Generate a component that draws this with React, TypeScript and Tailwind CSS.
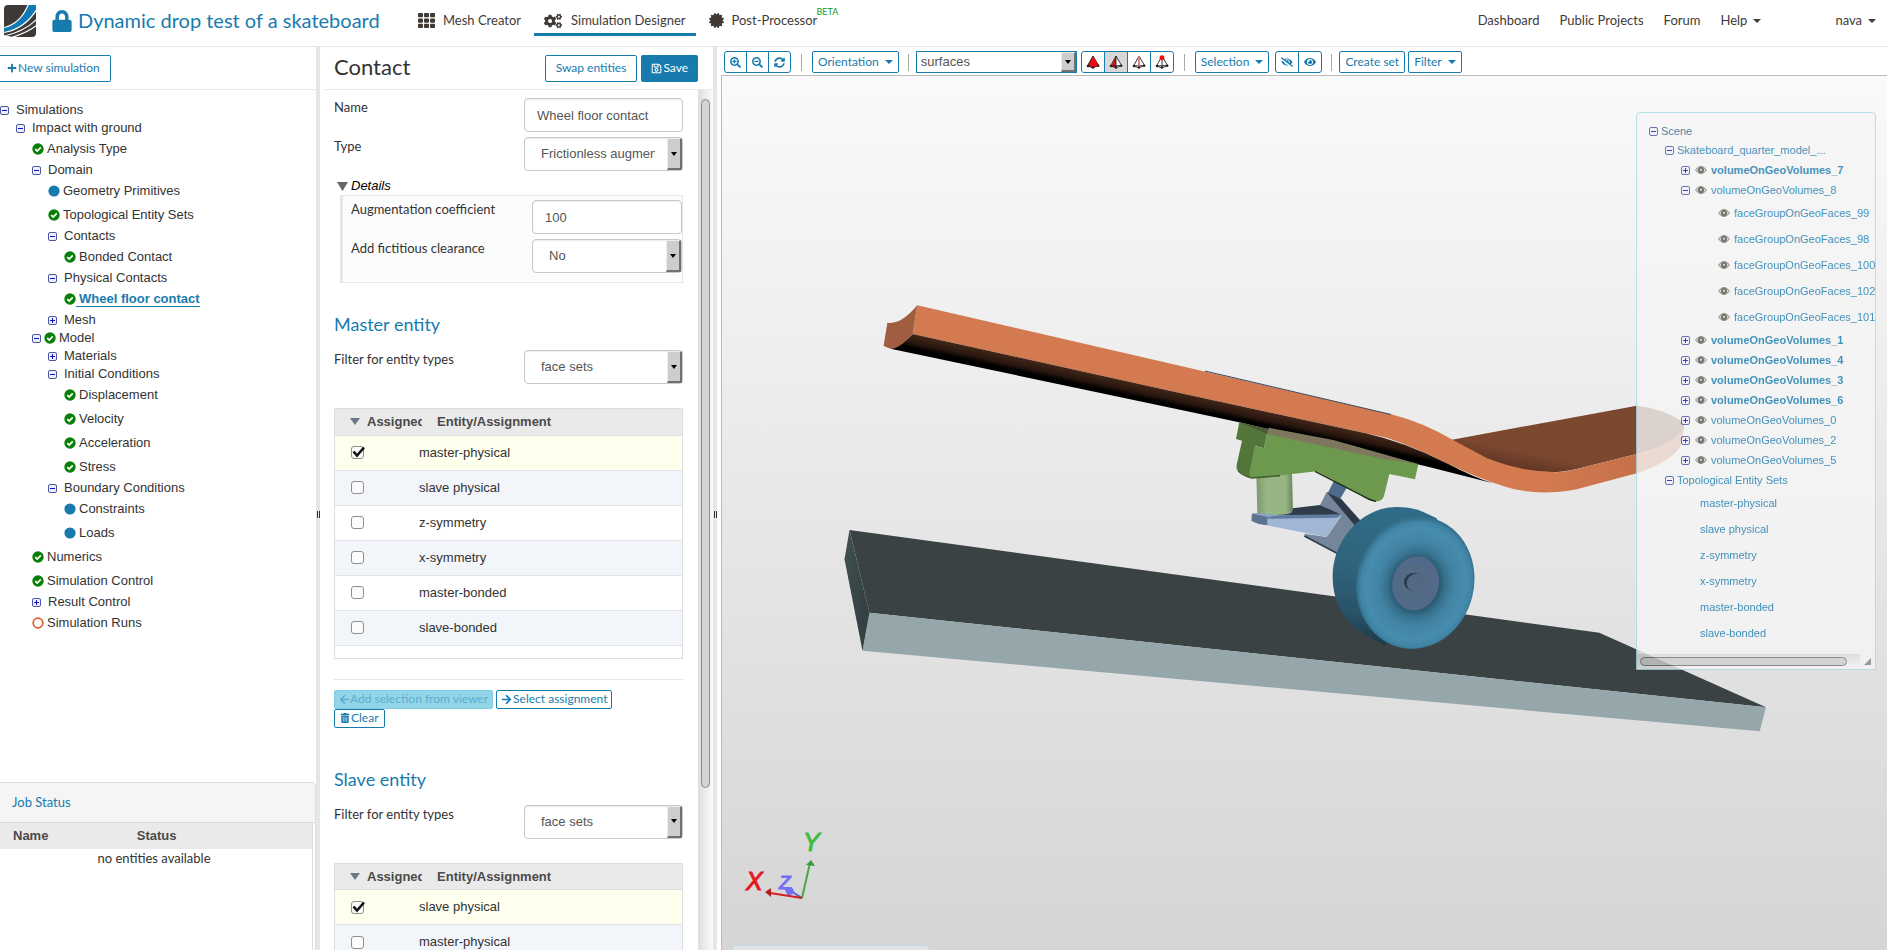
import React, { useId } from "react";
import {
  FaArrowLeft,
  FaArrowRight,
  FaCertificate,
  FaCogs,
  FaEye,
  FaEyeSlash,
  FaLock,
  FaPlus,
  FaRegSave,
  FaSearchMinus,
  FaSearchPlus,
  FaSyncAlt,
  FaTh,
  FaTrashAlt,
} from "react-icons/fa";

const BTN =
  "flex items-center justify-center rounded-[2px] border border-[#177bae] bg-white text-[#177bae] whitespace-nowrap";

function Logo() {
  return (
    <svg viewBox="0 0 32 32" className="h-8 w-8" aria-hidden="true">
      <defs>
        <clipPath id="logoClip">
          <path d="M4 0H32V28Q32 32 28 32H9Q4 31 0 30V4Q0 0 4 0Z" />
        </clipPath>
      </defs>
      <g clipPath="url(#logoClip)">
        <rect width="32" height="32" fill="#3f3a36" />
        <path d="M0 23C12 20 19 13 24 0H32V6C25 18 14 25 0 27Z" fill="#0f7ab5" />
        <path d="M0 22.500C11 20 19 13 24.500 -1" fill="none" stroke="#fff" strokeWidth="1.200" />
        <path d="M0 27.500C14 25 25 17 33 4" fill="none" stroke="#fff" strokeWidth="1.200" />
        <path d="M0 31C14 28 25 22 33 14" fill="none" stroke="#fff" strokeWidth="1.200" />
        <path d="M6 33C16 30 25 27 33 20" fill="none" stroke="#fff" strokeWidth="1.200" />
      </g>
    </svg>
  );
}

function Caret() {
  return (
    <svg viewBox="0 0 8 4" className="h-1 w-2" aria-hidden="true">
      <path d="M0 0H8L4 4Z" fill="currentColor" />
    </svg>
  );
}

function Header() {
  return (
    <header className="flex h-[47px] shrink-0 items-start border-b border-[#e6e6e6] pl-1 pr-[11px]">
      <div className="flex h-[41px] items-center">
        <Logo />
        <FaLock className="ml-4 h-[22px] w-5 text-[#177bae]" />
        <h1 className="ml-[6px] w-[340px] whitespace-nowrap pb-[2px] text-[20px] text-[#177bae]">
          Dynamic drop test of a skateboard
        </h1>
      </div>
      <nav className="flex h-9 items-stretch text-[13px] text-[#3f3a36]">
        <a href="#mesh" className="flex items-center pb-[2px] pr-[13px]">
          <FaTh className="mr-2 mt-[6px] h-[17px] w-[17px]" />
          <span className="pt-[7px]">Mesh Creator</span>
        </a>
        <a href="#simulation" className="flex items-center border-b-[3px] border-[#177bae] px-[10px]">
          <FaCogs className="mr-[9px] mt-2 h-[18px] w-[18px]" />
          <span className="pt-2">Simulation Designer</span>
        </a>
        <a href="#post" className="relative flex items-center pb-[3px] pl-[13px]">
          <FaCertificate className="mr-2 mt-2 h-[15px] w-[15px]" />
          <span className="pt-2">Post-Processor</span>
          <sup className="absolute -right-[21px] top-[7px] text-[9px] leading-none text-[#159a15]">BETA</sup>
        </a>
      </nav>
      <nav className="ml-auto flex h-[41px] items-center text-[13px] text-[#3f3a36]">
        <a href="#dashboard">Dashboard</a>
        <a href="#projects" className="ml-5">Public Projects</a>
        <a href="#forum" className="ml-5">Forum</a>
        <button className="ml-5 flex items-center gap-[6px]">Help <Caret /></button>
        <button className="ml-[74px] flex items-center gap-[6px]">nava <Caret /></button>
      </nav>
    </header>
  );
}

function Expander({ open }: { open: boolean }) {
  return (
    <svg viewBox="0 0 9 9" className="h-[9px] w-[9px] shrink-0" aria-hidden="true">
      <rect x="0.500" y="0.500" width="8" height="8" rx="1.500" fill="#f0f0f8" stroke="#4a56a8" />
      <path d={open ? "M2 4.500H7" : "M2 4.500H7M4.500 2V7"} stroke="#1010cc" />
    </svg>
  );
}

type Mark = "check" | "dot" | "ring";

function StatusMark({ mark }: { mark: Mark }) {
  return (
    <svg viewBox="0 0 12 12" className="h-3 w-3 shrink-0" aria-hidden="true">
      {mark === "check" && (
        <>
          <circle cx="6" cy="6" r="5.700" fill="#088008" />
          <path d="M3.200 6.200L5.200 8L8.800 4.300" fill="none" stroke="#fff" strokeWidth="1.700" />
        </>
      )}
      {mark === "dot" && <circle cx="6" cy="6" r="5.600" fill="#177bae" />}
      {mark === "ring" && <circle cx="6" cy="6" r="4.800" fill="#fff" stroke="#e0592a" strokeWidth="1.700" />}
    </svg>
  );
}

type Node = { t: string; d: number; open?: boolean; mark?: Mark; active?: boolean };

const NODES: Node[] = [
  { t: "Simulations", d: 0, open: true },
  { t: "Impact with ground", d: 1, open: true },
  { t: "Analysis Type", d: 2, mark: "check" },
  { t: "Domain", d: 2, open: true },
  { t: "Geometry Primitives", d: 3, mark: "dot" },
  { t: "Topological Entity Sets", d: 3, mark: "check" },
  { t: "Contacts", d: 3, open: true },
  { t: "Bonded Contact", d: 4, mark: "check" },
  { t: "Physical Contacts", d: 3, open: true },
  { t: "Wheel floor contact", d: 4, mark: "check", active: true },
  { t: "Mesh", d: 3, open: false },
  { t: "Model", d: 2, open: true, mark: "check" },
  { t: "Materials", d: 3, open: false },
  { t: "Initial Conditions", d: 3, open: true },
  { t: "Displacement", d: 4, mark: "check" },
  { t: "Velocity", d: 4, mark: "check" },
  { t: "Acceleration", d: 4, mark: "check" },
  { t: "Stress", d: 4, mark: "check" },
  { t: "Boundary Conditions", d: 3, open: true },
  { t: "Constraints", d: 4, mark: "dot" },
  { t: "Loads", d: 4, mark: "dot" },
  { t: "Numerics", d: 2, mark: "check" },
  { t: "Simulation Control", d: 2, mark: "check" },
  { t: "Result Control", d: 2, open: false },
  { t: "Simulation Runs", d: 2, mark: "ring" },
];

const INDENT = ["pl-0", "pl-4", "pl-8", "pl-12", "pl-16"];

function TreeRow({ node }: { node: Node }) {
  const folder = node.open !== undefined;
  return (
    <li className={`flex items-center ${INDENT[node.d]} ${folder ? "h-[18px]" : "h-6"}`}>
      {folder && <Expander open={!!node.open} />}
      {folder && node.mark && <span className="w-[3px]" />}
      {node.mark && <StatusMark mark={node.mark} />}
      <a
        href="#node"
        className={
          node.active
            ? "border-b border-[#177bae] pl-[3px] font-bold leading-[14px] text-[#177bae]"
            : folder && !node.mark
              ? "pl-[7px] text-[#333]"
              : "pl-[3px] text-[#333]"
        }
      >
        {node.t}
      </a>
    </li>
  );
}

function LeftPanel() {
  return (
    <aside className="flex w-[316px] shrink-0 flex-col">
      <div className="flex h-[43px] items-center border-b border-[#e6e6e6]">
        <button className={`${BTN} h-[27px] rounded-l-none border-l-0 pl-[7px] pr-[10px] text-[12px]`}>
          <FaPlus className="mr-px h-[10px] w-[10px]" />
          New simulation
        </button>
      </div>
      <ul className="flex-1 overflow-hidden pt-[11px] font-[family-name:'Liberation_Sans',Arial,sans-serif] text-[13px] leading-4">
        {NODES.map((n) => (
          <TreeRow key={n.t} node={n} />
        ))}
      </ul>
      <section className="flex h-[168px] flex-col rounded-tr border-r border-t border-[#dcdcdc]">
        <h2 className="flex h-10 items-center border-b border-[#dcdcdc] bg-[#f5f5f5] pl-3 text-[13px] text-[#177bae]">
          Job Status
        </h2>
        <div className="mr-[2px] flex-1 border-r border-[#dcdcdc]">
          <table className="w-full table-fixed text-[13px] text-[#333]">
            <thead>
              <tr className="h-[26px] bg-[#eaeaea] text-left font-[family-name:'Liberation_Sans',Arial,sans-serif] text-[13px] text-[#4a4a4a]">
                <th className="w-[40%] pl-[13px]">Name</th>
                <th className="pl-3">Status</th>
              </tr>
            </thead>
            <tbody>
              <tr>
                <td colSpan={2} className="pr-1 text-center leading-[18px]">no entities available</td>
              </tr>
            </tbody>
          </table>
        </div>
      </section>
    </aside>
  );
}

function Splitter() {
  return (
    <div className="flex w-1 shrink-0 items-center justify-end bg-[#e6e6e6] pt-8">
      <span className="h-[7px] w-[3px] border-x border-[#333]" />
    </div>
  );
}

function ArrowButton() {
  return (
    <span className="pointer-events-none absolute bottom-px right-px top-px flex w-[15px] items-center justify-center border-b-2 border-l border-r-2 border-t border-b-[#707070] border-l-[#ececec] border-r-[#707070] border-t-[#ececec] bg-[#cdcdcd]">
      <svg viewBox="0 0 6 4" className="h-1 w-[6px]" aria-hidden="true">
        <path d="M0 0H6L3 4Z" fill="#000" />
      </svg>
    </span>
  );
}

const SANS = "font-[family-name:'Liberation_Sans',Arial,sans-serif]";

function Field({
  label,
  value,
  kind,
  narrow,
}: {
  label: string;
  value: string;
  kind: "input" | "select";
  narrow?: boolean;
}) {
  const id = useId();
  return (
    <div className="flex h-[34px] items-start justify-between text-[13px] text-[#333]">
      <label htmlFor={id} className="leading-[18px]">{label}</label>
      <div className={`relative h-[34px] ${narrow ? "w-[150px]" : "w-[159px]"}`}>
        {kind === "input" ? (
          <input
            id={id}
            defaultValue={value}
            className={`${SANS} h-full w-full rounded border border-[#c8c8c8] bg-white px-3 text-[13px] text-[#555] shadow-[inset_0_1px_1px_rgba(0,0,0,0.08)]`}
          />
        ) : (
          <>
            <select
              id={id}
              className={`${SANS} h-full w-full appearance-none overflow-hidden rounded border border-[#c8c8c8] bg-white pl-4 pr-[27px] text-[13px] text-[#555] shadow-[inset_0_1px_1px_rgba(0,0,0,0.08)]`}
            >
              <option>{value}</option>
            </select>
            <ArrowButton />
          </>
        )}
      </div>
    </div>
  );
}

function EntityTable({ rows }: { rows: string[] }) {
  return (
    <div className="mt-6 border border-[#ddd] pb-3">
      <table className={`${SANS} w-full table-fixed text-[13px] text-[#333]`}>
        <colgroup>
          <col className="w-[84px]" />
          <col className="w-[18px]" />
          <col />
        </colgroup>
        <thead>
          <tr className="h-[26px] border-b border-[#ddd] bg-[#eaeaea] text-left text-[#4a4a4a]">
            <th colSpan={2} className="pl-[15px] pr-[15px]">
              <span className="flex items-center overflow-hidden">
                <svg viewBox="0 0 10 7" className="mr-[7px] h-[7px] w-[10px] shrink-0" aria-hidden="true">
                  <path d="M0 0H10L5 7Z" fill="#6d7787" />
                </svg>
                Assigned
              </span>
            </th>
            <th>Entity/Assignment</th>
          </tr>
        </thead>
        <tbody>
          {rows.map((r, i) => (
            <tr
              key={r}
              className={`h-[35px] border-b border-[#e2e4e8] ${i === 0 ? "bg-[#ffffee]" : i % 2 ? "bg-[#f2f5fa]" : "bg-white"}`}
            >
              <td className="pl-4">
                <span className="grid h-[13px] w-[15px]">
                  <input
                    type="checkbox"
                    aria-label={r}
                    defaultChecked={i === 0}
                    className="peer col-start-1 row-start-1 h-[13px] w-[13px] appearance-none rounded-[3px] border border-[#8f8f8f] bg-[#fcfcfc]"
                  />
                  <svg
                    viewBox="0 0 15 13"
                    className="pointer-events-none col-start-1 row-start-1 hidden h-[13px] w-[15px] peer-checked:block"
                    aria-hidden="true"
                  >
                    <path d="M2.500 5.500L6 9.500L13 1.500" fill="none" stroke="#111" strokeWidth="2.600" />
                  </svg>
                </span>
              </td>
              <td colSpan={2}>{r}</td>
            </tr>
          ))}
        </tbody>
      </table>
    </div>
  );
}

function EntitySection({ title, rows }: { title: string; rows: string[] }) {
  return (
    <section className="pb-10">
      <h3 className="mb-[15px] text-[18px] leading-[22px] text-[#177bae]">{title}</h3>
      <Field label="Filter for entity types" value="face sets" kind="select" />
      <EntityTable rows={rows} />
      <div className="mt-5 flex flex-col items-start border-t border-[#e6e6e6] pt-[10px] text-[12px]">
        <div className="flex gap-[3px]">
          <button
            disabled
            className="flex h-[19px] items-center whitespace-nowrap rounded-[2px] border border-[#7fcde3] bg-[#93d5e8] px-1 text-[#5badd0]"
          >
            <FaArrowLeft className="h-[11px] w-[11px]" />
            Add selection from viewer
          </button>
          <button className={`${BTN} h-[19px] px-1`}>
            <FaArrowRight className="mr-px h-[11px] w-[11px]" />
            Select assignment
          </button>
        </div>
        <button className={`${BTN} h-[19px] px-[5px]`}>
          <FaTrashAlt className="mr-px h-[10px] w-[10px]" />
          Clear
        </button>
      </div>
    </section>
  );
}

function ContactPanel() {
  return (
    <main className="flex w-[393px] shrink-0 flex-col">
      <div className="ml-1 flex h-[43px] shrink-0 items-center border-b border-[#e6e6e6] pl-[10px] pr-[15px]">
        <h2 className="pb-[3px] text-[22px] leading-7 text-[#333]">Contact</h2>
        <button className={`${BTN} ml-auto h-[27px] px-[10px] text-[12px]`}>Swap entities</button>
        <button className="ml-1 flex h-[27px] items-center rounded-[2px] bg-[#177bae] px-[10px] text-[12px] text-white">
          <FaRegSave className="mr-px h-[11px] w-[11px]" />
          Save
        </button>
      </div>
      <div className="flex min-h-0 flex-1">
        <form className="h-full min-w-0 flex-1 overflow-hidden pl-[14px] pr-[15px] pt-2">
          <div className="flex flex-col gap-[5px]">
            <Field label="Name" value="Wheel floor contact" kind="input" />
            <Field label="Type" value="Frictionless augmented Lagrange" kind="select" />
          </div>
          <details open className="mb-[30px] mt-[6px]">
            <summary className={`${SANS} flex h-[18px] items-center pl-[3px] text-[13px] italic text-black`}>
              <svg viewBox="0 0 11 9" className="mr-[3px] h-[9px] w-[11px]" aria-hidden="true">
                <path d="M0 0H11L5.500 9Z" fill="#666" />
              </svg>
              Details
            </summary>
            <div className="ml-[6px] flex flex-col gap-[5px] border border-l-[3px] border-[#e6e6e6] bg-[#fcfcfc] pb-[9px] pl-2 pt-1">
              <Field label="Augmentation coefficient" value="100" kind="input" narrow />
              <Field label="Add fictitious clearance" value="No" kind="select" narrow />
            </div>
          </details>
          <EntitySection
            title="Master entity"
            rows={["master-physical", "slave physical", "z-symmetry", "x-symmetry", "master-bonded", "slave-bonded"]}
          />
          <EntitySection
            title="Slave entity"
            rows={["slave physical", "master-physical", "z-symmetry", "x-symmetry", "master-bonded", "slave-bonded"]}
          />
        </form>
        <div className="w-[15px] bg-linear-to-r from-[#dedede] to-[#fbfbfb] pl-[3px] pt-[9px]">
          <div className="h-[81%] w-[9px] rounded-full border border-[#8c8c8c] bg-[#d4d4d4]" />
        </div>
      </div>
    </main>
  );
}

function Tetra({ variant }: { variant: "solid" | "face" | "edge" | "point" }) {
  return (
    <svg viewBox="0 0 14 14" className="h-[14px] w-[14px]" aria-hidden="true">
      <path d="M7 1L1 11L7 13L13 10.500Z" fill={variant === "solid" ? "#e01010" : "#fff"} />
      {variant === "face" && <path d="M7 1L2 11L7 13Z" fill="#e01010" />}
      <path d="M7 1L1.500 11L7 12.800L12.500 10.500Z M7 1L7 12.800 M1.500 11L12.500 10.500" fill="none" stroke="#222" strokeWidth="0.900" />
      {variant === "solid" && <path d="M7 1L3.500 11L7 12.800L12.500 10.500Z" fill="#e81010" />}
      {variant === "edge" && <path d="M7 1L7 12.800" stroke="#f08080" strokeWidth="1.500" />}
      {variant === "point" && <circle cx="7" cy="2.800" r="2.500" fill="#f01010" />}
      <circle cx="2" cy="11" r="1.300" fill="#222" />
      <circle cx="7" cy="12.500" r="1.200" fill="#222" />
      <circle cx="12.200" cy="10.800" r="1.200" fill="#222" />
    </svg>
  );
}

function Separator({ wide }: { wide?: boolean }) {
  return <span className={`h-[17px] w-px bg-[#aaa] ${wide ? "mx-[10px]" : "ml-[9px] mr-[7px]"}`} />;
}

const ICON_BTN = "flex h-full items-center justify-center px-[5px]";

function Toolbar() {
  const group = "flex h-[22px] items-stretch divide-x divide-[#177bae] rounded-[3px] border border-[#177bae] text-[#177bae]";
  return (
    <div className="flex h-7 shrink-0 items-center pb-[2px] pl-[7px] pt-1 text-[12px]">
      <div className={group}>
        <button aria-label="Zoom in" className={ICON_BTN}><FaSearchPlus className="h-[11px] w-[11px]" /></button>
        <button aria-label="Zoom out" className={ICON_BTN}><FaSearchMinus className="h-[11px] w-[11px]" /></button>
        <button aria-label="Reset view" className={ICON_BTN}><FaSyncAlt className="h-[11px] w-[11px]" /></button>
      </div>
      <Separator wide />
      <button className={`${BTN} h-[22px] gap-[6px] px-[5px]`}>Orientation <Caret /></button>
      <Separator />
      <div className="relative h-[22px] w-[161px]">
        <select
          aria-label="Display mode"
          className={`${SANS} h-full w-full appearance-none border border-[#177bae] bg-white px-1 text-[13px] text-[#555]`}
        >
          <option>surfaces</option>
        </select>
        <ArrowButton />
      </div>
      <div className={`${group} ml-1`}>
        <button aria-label="Solid" className="px-1"><Tetra variant="solid" /></button>
        <button aria-label="Faces" className="bg-[#d8d8d8] px-1"><Tetra variant="face" /></button>
        <button aria-label="Edges" className="px-1"><Tetra variant="edge" /></button>
        <button aria-label="Points" className="px-1"><Tetra variant="point" /></button>
      </div>
      <Separator wide />
      <button className={`${BTN} h-[22px] gap-[6px] px-[5px]`}>Selection <Caret /></button>
      <div className={`${group} ml-[6px]`}>
        <button aria-label="Hide" className={ICON_BTN}><FaEyeSlash className="h-3 w-3" /></button>
        <button aria-label="Show" className={ICON_BTN}><FaEye className="h-3 w-3" /></button>
      </div>
      <Separator />
      <button className={`${BTN} h-[22px] px-[5px]`}>Create set</button>
      <button className={`${BTN} ml-[3px] h-[22px] gap-[6px] px-[5px]`}>Filter <Caret /></button>
    </div>
  );
}

function Model() {
  return (
    <svg viewBox="722 76 1165 874" preserveAspectRatio="xMinYMin meet" className="absolute inset-0 h-full w-full" aria-hidden="true">
      <defs>
        <linearGradient id="under" gradientUnits="userSpaceOnUse" x1="1180" y1="393" x2="1176.500" y2="409">
          <stop offset="0" stopColor="#422619" />
          <stop offset="0.500" stopColor="#28160e" />
          <stop offset="0.800" stopColor="#000" />
        </linearGradient>
        <linearGradient id="tail" gradientUnits="userSpaceOnUse" x1="1535" y1="420" x2="1524" y2="474">
          <stop offset="0.600" stopColor="#7b472f" />
          <stop offset="1" stopColor="#5a3222" />
        </linearGradient>
        <linearGradient id="deck" gradientUnits="userSpaceOnUse" x1="1540" y1="0" x2="1690" y2="0">
          <stop offset="0" stopColor="#d37a50" />
          <stop offset="0.500" stopColor="#c9734b" />
          <stop offset="1" stopColor="#bc6a44" />
        </linearGradient>
        <linearGradient id="side" x1="0" y1="0" x2="1" y2="1">
          <stop offset="0" stopColor="#42504f" />
          <stop offset="1" stopColor="#303c3e" />
        </linearGradient>
        <linearGradient id="post" x1="0" y1="0" x2="1" y2="0">
          <stop offset="0" stopColor="#7d996c" />
          <stop offset="0.300" stopColor="#98b786" />
          <stop offset="0.800" stopColor="#95b482" />
          <stop offset="1" stopColor="#6b855b" />
        </linearGradient>
        <linearGradient id="tread" gradientUnits="userSpaceOnUse" x1="600" y1="350" x2="570" y2="760">
          <stop offset="0" stopColor="#2f6c88" />
          <stop offset="0.450" stopColor="#30637b" />
          <stop offset="0.800" stopColor="#285268" />
          <stop offset="1" stopColor="#1d3a48" />
        </linearGradient>
        <radialGradient id="tyre" cx="0.510" cy="0.510" r="0.500">
          <stop offset="0.380" stopColor="#27566c" />
          <stop offset="0.500" stopColor="#37738f" />
          <stop offset="0.640" stopColor="#4384a4" />
          <stop offset="0.850" stopColor="#468cae" />
          <stop offset="0.940" stopColor="#4184a5" />
          <stop offset="1" stopColor="#34718d" />
        </radialGradient>
      </defs>

      {/* ground block */}
      <path d="M849.500 530L1599.300 632.700L1766 707.300L869.400 612.700Z" fill="#3b4243" />
      <path d="M869.400 612.700L1766 707.300L1759.700 731.300L862.500 650.700Z" fill="#95a7ab" />
      <path d="M849.500 530L869.400 612.700L862.500 650.700L844.500 559.300Z" fill="url(#side)" />

      {/* deck */}
      <path
        d="M1450.700 440L1636.700 405.700Q1663 409 1680 420Q1686 426 1683 432Q1676 444 1636.700 454L1576.700 469Q1550 476 1510 467.300Q1486 461 1450.700 440Z"
        fill="url(#tail)"
      />
      <path
        d="M917.200 305.300L1391 414.300Q1422 422 1453 440L1486.700 458Q1522 472 1556.700 472.300Q1566 472 1576.700 469L1636.700 454Q1676 443 1683 428Q1684 446 1675 453Q1664 464 1636.700 473.300L1576.700 489.300Q1535 497 1503 486Q1480 479 1446.700 463.300Q1415 447 1386.700 437.700L1180 393L912.700 334Z"
        fill="url(#deck)"
      />
      <path d="M1205 371L1391 414.500" stroke="#3a4a62" strokeWidth="1" />
      <path
        d="M912.700 334L1180 393L1365.700 433.300Q1405 442 1446.700 463.300Q1475 478 1493 483.300L1430 467.300L1236.700 421.700L1180 409.700L890.500 348.700Q903 345 912.700 334Z"
        fill="url(#under)"
      />
      <path d="M887.400 322.700Q901 325 917.200 305.300L912.700 334Q898 350 890.500 348.700L883.600 346Z" fill="#a05d40" />

      {/* truck and wheel */}
      <g transform="translate(1180 390) scale(0.33333)">
        <path d="M229 250H336L339 364Q320 376 280 376Q245 376 232 370Z" fill="url(#post)" />
        <path d="M462 272L502 290L480 328L443 310Z" fill="#4f6a8c" />
        <path d="M178 97L264 118L252 175L226 168L212 264L175 244Q168 238 170 225L186 152L168 147Z" fill="#53763a" />
        <path
          d="M264 118L715 222L705 268L628 252L612 318Q606 336 585 334Q570 330 545 315L410 244L218 265Q206 262 208 250L224 168L252 175Z"
          fill="#6c994e"
        />
        <path d="M405 244L545 316Q568 330 588 334" fill="none" stroke="#1d2a12" strokeWidth="4" />
        <path d="M175 243Q190 258 216 264L300 257" fill="none" stroke="#44622f" strokeWidth="5" />
        <path d="M266 113L460 150L715 222L610 207L262 132Z" fill="#7f775d" />
        <path d="M178 97L264 117L262 132Z" fill="#4a5a33" />
        <path d="M440 306L484 328L545 400L530 440L474 490L374 438V431L440 441L485 376L420 345Z" fill="#75869a" />
        <path d="M440 306L484 328L542 392L526 408Z" fill="#2c3a48" />
        <path d="M338 355L420 345L485 374L262 378L300 374Q335 372 338 362Z" fill="#2e3c4a" />
        <path d="M262 375L485 374L440 441L260 406Z" fill="#a0b6d4" />
        <path d="M262 376L485 374L470 383L262 386Z" fill="#5f7ba0" />
        <path d="M216 371L240 369L262 378V406Q235 404 214 392Z" fill="#5b7290" />
        <path d="M216 371L240 370L300 376L262 381Z" fill="#8ba3c4" />
        <path d="M373 438L474 491" stroke="#2c3a4c" strokeWidth="5" />
        <path
          d="M650 351C545 351 458 450 458 560C458 628 488 686 528 716L615 768L780 420L770 385L735 368Q700 351 650 351Z"
          fill="url(#tread)"
        />
        <ellipse cx="706" cy="578" rx="176" ry="200" transform="rotate(14 706 578)" fill="url(#tyre)" />
        <ellipse cx="707" cy="580" rx="70" ry="82" transform="rotate(14 707 580)" fill="#52698a" />
        <ellipse cx="699" cy="578" rx="52" ry="60" transform="rotate(14 699 578)" fill="#546b86" />
        <ellipse cx="704" cy="576" rx="32" ry="28" fill="#283a4a" />
        <ellipse cx="713" cy="579" rx="33" ry="29" fill="#526883" />
      </g>

      {/* axis triad */}
      <g fontFamily="'Liberation Sans', Arial, sans-serif" fontStyle="italic">
        <path d="M802 898L789 890" stroke="#5a5ad0" strokeWidth="2" />
        <path d="M784 888L792 887L795 893L788 896Z" fill="#7070f0" />
        <path d="M802 898L810 863" stroke="#46a846" strokeWidth="2" />
        <path d="M806 865L811 860L815 866Z" fill="#3f9a3f" />
        <path d="M802 898L770 893" stroke="#d42020" strokeWidth="2" />
        <path d="M765 892L771 888L771 897Z" fill="#b02020" />
        <text x="746" y="890" fontSize="25" fill="#e41a1a" stroke="#e41a1a">X</text>
        <text x="803" y="851" fontSize="25" fill="#44bb44" stroke="#44bb44">Y</text>
        <text x="779" y="889" fontSize="19" fill="#7070f4" stroke="#7070f4">Z</text>
      </g>
    </svg>
  );
}

function SceneEye() {
  return (
    <svg viewBox="0 0 12 8" className="h-2 w-3 shrink-0" aria-hidden="true">
      <path d="M0.500 4Q6 -3 11.500 4Q6 11 0.500 4Z" fill="#d8d8d4" stroke="#66665c" strokeWidth="1" />
      <circle cx="6" cy="4" r="3.100" fill="#55554a" />
      <circle cx="6" cy="3.800" r="1.100" fill="#ddd" />
    </svg>
  );
}

function VolumeRow({ n, bold, open = false }: { n: number; bold?: boolean; open?: boolean }) {
  return (
    <li className="flex h-5 items-center pl-8">
      <Expander open={open} />
      <span className="w-[5px]" />
      <SceneEye />
      <a href="#volume" className={bold ? "pl-1 font-bold" : "pl-1"}>{`volumeOnGeoVolumes_${n}`}</a>
    </li>
  );
}

function ScenePanel() {
  return (
    <section
      className={`${SANS} absolute right-[11px] top-9 w-60 overflow-hidden rounded-t border border-[#a8d8e4] bg-[#f5f5f5] text-[11px] leading-4 text-[#177bae] opacity-80`}
    >
      <ul className="whitespace-nowrap pb-2 pl-3 pt-[9px]">
        <li className="flex h-[18px] items-center gap-[3px] text-[#156a94]"><Expander open />Scene</li>
        <li className="flex h-5 items-center gap-[3px] pl-4"><Expander open />Skateboard_quarter_model_...</li>
        <VolumeRow n={7} bold />
        <VolumeRow n={8} open />
        {[99, 98, 100, 102, 101].map((n) => (
          <li key={n} className="flex h-[26px] items-center gap-1 pl-[69px]">
            <SceneEye />
            <a href="#face">{`faceGroupOnGeoFaces_${n}`}</a>
          </li>
        ))}
        {[1, 4, 3, 6].map((n) => <VolumeRow key={n} n={n} bold />)}
        {[0, 2, 5].map((n) => <VolumeRow key={n} n={n} />)}
        <li className="flex h-5 items-center gap-[3px] pl-4"><Expander open />Topological Entity Sets</li>
        {["master-physical", "slave physical", "z-symmetry", "x-symmetry", "master-bonded", "slave-bonded"].map((t) => (
          <li key={t} className="flex h-[26px] items-center pl-[51px]"><a href="#set">{t}</a></li>
        ))}
      </ul>
      <div className="flex items-center">
        <div className="h-[15px] w-[223px] bg-linear-to-b from-[#dedede] to-[#f8f8f8] pl-[3px] pt-[3px]">
          <div className="h-[9px] w-[207px] rounded-full border border-[#777] bg-[#d0d0d0]" />
        </div>
        <svg viewBox="0 0 7 7" className="ml-1 h-[7px] w-[7px]" aria-hidden="true">
          <path d="M7 0V7H0Z" fill="#888" />
        </svg>
      </div>
    </section>
  );
}

export default function App() {
  return (
    <div className="flex h-screen flex-col overflow-hidden bg-white font-[family-name:Lato,sans-serif] leading-normal">
      <Header />
      <div className="flex min-h-0 flex-1">
        <LeftPanel />
        <Splitter />
        <ContactPanel />
        <Splitter />
        <div className="flex min-w-0 flex-1 flex-col">
          <Toolbar />
          <div className="relative ml-1 min-h-0 flex-1 overflow-hidden border-l border-t border-[#bbb] bg-linear-to-b from-[#fafafa] to-[#d5d5d5]">
            <Model />
            <ScenePanel />
            <div className="absolute -bottom-1 left-[10px] h-[9px] w-[198px] rounded border border-[#b9dde6] bg-[#e6e6e6]/80" />
          </div>
        </div>
      </div>
    </div>
  );
}
